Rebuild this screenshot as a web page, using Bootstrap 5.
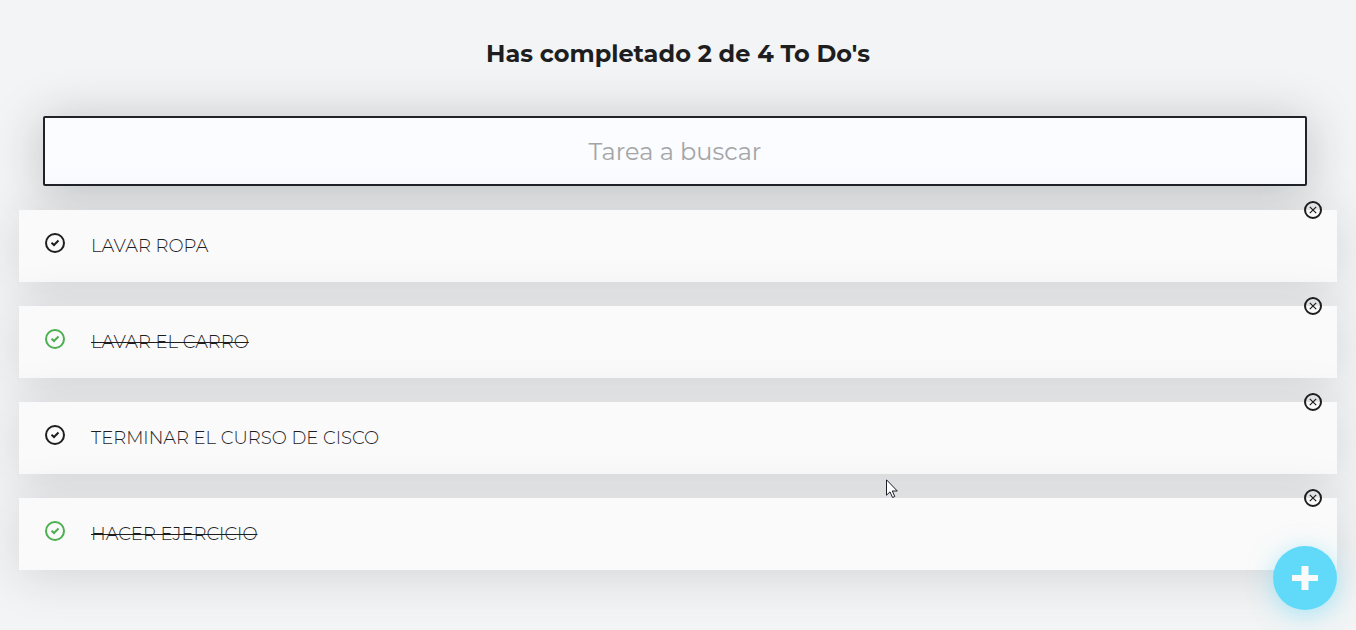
<!DOCTYPE html>
<html lang="es">
<head>
<meta charset="utf-8">
<meta name="viewport" content="width=device-width, initial-scale=1">
<title>To Do's</title>
<link href="https://cdn.jsdelivr.net/npm/bootstrap@5.3.0/dist/css/bootstrap.min.css" rel="stylesheet">
<style>
  body { background: #f2f4f5; color: #1e1e1f; font-family: Montserrat, Inter, "Open Sans", sans-serif; }
  .todo-title { font-size: 24px; line-height: 28px; font-weight: 700; padding: 40px 0 48px; }
  .todo-app { padding: 0 19px; }
  .todo-search { margin: 0 30px 0 24px; }
  .todo-search .form-control {
    height: 70px; padding: 0 24px; border: 2px solid #202329; border-radius: 2px;
    background: #fafcff; color: #1e1e1f; font-size: 24px; line-height: 28px;
    box-shadow: 0 5px 50px rgba(32, 35, 37, .25);
  }
  .todo-search .form-control::placeholder { color: #a5a5a5; }
  .todo-item { background: #fafafa; height: 72px; margin-top: 24px; box-shadow: 0 5px 50px rgba(32, 35, 37, .15); }
  .todo-check { width: 48px; height: 48px; margin-left: 12px; padding-bottom: 6px; color: #1e1e1f; }
  .todo-text { margin-left: 12px; font-size: 18px; line-height: 24px; font-weight: 300; }
  .todo-done .todo-check { color: #4caf50; }
  .todo-done .todo-text { text-decoration: line-through; text-decoration-thickness: 1px; }
  .todo-remove { top: -12px; right: 12px; width: 24px; height: 24px; color: #1e1e1f; }
  .todo-add { right: 19px; bottom: 20px; width: 64px; height: 64px; background: #61dafa; box-shadow: 0 5px 25px rgba(97, 218, 250, .5); }
  .pointer { left: 886px; top: 479px; pointer-events: none; }
</style>
</head>
<body>
<svg class="d-none">
  <symbol id="i-check" viewBox="0 0 24 24">
    <circle cx="12" cy="12" r="9" fill="none" stroke="currentColor" stroke-width="2"/>
    <path d="M8.500 11.700l2.500 2.300 4.500-4.500" fill="none" stroke="currentColor" stroke-width="2"/>
  </symbol>
  <symbol id="i-close" viewBox="0 0 24 24">
    <circle cx="12" cy="12" r="8" fill="none" stroke="currentColor" stroke-width="2"/>
    <path d="M8.800 8.800l6.400 6.400M15.200 8.800l-6.400 6.400" fill="none" stroke="currentColor" stroke-width="1.200"/>
  </symbol>
</svg>
<main class="todo-app min-vh-100">
  <h1 class="todo-title text-center m-0">Has completado 2 de 4 To Do's</h1>
  <div class="todo-search">
    <input id="search" type="text" class="form-control text-center" placeholder="Tarea a buscar" aria-label="Tarea a buscar">
  </div>
  <ul class="list-unstyled m-0">
    <li class="todo-item position-relative d-flex align-items-center">
      <button type="button" class="todo-check btn border-0 px-0 pt-0 d-flex align-items-center justify-content-center" aria-label="Completar"><svg width="24" height="24"><use href="#i-check"/></svg></button>
      <p class="todo-text mb-0">LAVAR ROPA</p>
      <button type="button" class="todo-remove btn border-0 p-0 d-flex position-absolute" aria-label="Eliminar"><svg width="24" height="24"><use href="#i-close"/></svg></button>
    </li>
    <li class="todo-item todo-done position-relative d-flex align-items-center">
      <button type="button" class="todo-check btn border-0 px-0 pt-0 d-flex align-items-center justify-content-center" aria-label="Completar"><svg width="24" height="24"><use href="#i-check"/></svg></button>
      <p class="todo-text mb-0">LAVAR EL CARRO</p>
      <button type="button" class="todo-remove btn border-0 p-0 d-flex position-absolute" aria-label="Eliminar"><svg width="24" height="24"><use href="#i-close"/></svg></button>
    </li>
    <li class="todo-item position-relative d-flex align-items-center">
      <button type="button" class="todo-check btn border-0 px-0 pt-0 d-flex align-items-center justify-content-center" aria-label="Completar"><svg width="24" height="24"><use href="#i-check"/></svg></button>
      <p class="todo-text mb-0">TERMINAR EL CURSO DE CISCO</p>
      <button type="button" class="todo-remove btn border-0 p-0 d-flex position-absolute" aria-label="Eliminar"><svg width="24" height="24"><use href="#i-close"/></svg></button>
    </li>
    <li class="todo-item todo-done position-relative d-flex align-items-center">
      <button type="button" class="todo-check btn border-0 px-0 pt-0 d-flex align-items-center justify-content-center" aria-label="Completar"><svg width="24" height="24"><use href="#i-check"/></svg></button>
      <p class="todo-text mb-0">HACER EJERCICIO</p>
      <button type="button" class="todo-remove btn border-0 p-0 d-flex position-absolute" aria-label="Eliminar"><svg width="24" height="24"><use href="#i-close"/></svg></button>
    </li>
  </ul>
</main>
<button type="button" class="todo-add btn border-0 p-0 rounded-circle position-fixed d-flex align-items-center justify-content-center" aria-label="Agregar">
  <svg width="26" height="24" viewBox="0 0 26 24"><path d="M9.500 0h7v9H26v6h-9.500v9h-7v-9H0V9h9.500z" fill="#fafafa"/></svg>
</button>
<svg class="pointer position-fixed" width="13" height="20" viewBox="0 0 13 20"><path d="M.5.8v15.400l3.500-3.300 2.600 5.600 2.200-1-2.500-5.500h5z" fill="#fff" stroke="#1b1d2b" stroke-width="1"/></svg>
<script src="https://cdn.jsdelivr.net/npm/bootstrap@5.3.0/dist/js/bootstrap.bundle.min.js"></script>
</body>
</html>
